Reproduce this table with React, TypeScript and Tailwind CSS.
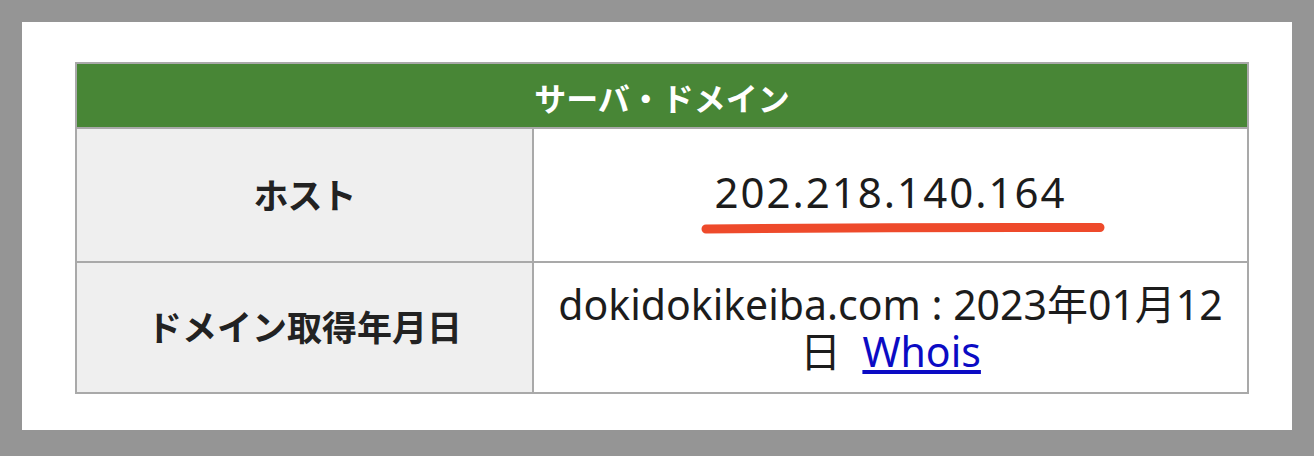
import React from "react";

export default function App() {
  const font = { fontFamily: '"Noto Sans", "Noto Sans CJK JP", sans-serif' };
  return (
    <div className="w-[1314px] h-[456px] bg-[#959595] pt-[22px] pl-[22px]" style={font}>
      <div className="w-[1270px] h-[408px] bg-white pl-[53px] pr-[43px] pt-[40px]">
        <div className="border-2 border-[#a9a9a9]">
          <div className="h-[65px] bg-[#488636] flex items-center justify-center border-b-2 border-[#a9a9a9]">
            <span className="text-[32px] font-bold text-white leading-none pt-[6px]">サーバ・ドメイン</span>
          </div>
          <div className="grid grid-cols-[457px_1fr] h-[134px] border-b-2 border-[#a9a9a9]">
            <div className="bg-[#efefef] border-r-2 border-[#a9a9a9] flex items-center justify-center">
              <span className="text-[35px] font-bold text-[#222] leading-none tracking-[-1px]">ホスト</span>
            </div>
            <div className="relative flex items-center justify-center">
              <span className="text-[42px] tracking-[2px] text-[#1c1c1c] leading-none mb-[6px]" style={{ fontFamily: '"Noto Sans", sans-serif' }}>
                202.218.140.164
              </span>
              <svg className="absolute left-[166px] top-[88px]" width="410" height="22" viewBox="0 0 410 22">
                <path d="M6 12 Q 200 10 400 10.5" stroke="#ee4a2b" strokeWidth="9" strokeLinecap="round" fill="none" />
              </svg>
            </div>
          </div>
          <div className="grid grid-cols-[457px_1fr] h-[129px]">
            <div className="bg-[#efefef] border-r-2 border-[#a9a9a9] flex items-center justify-center">
              <span className="text-[35px] font-bold text-[#222] leading-none">ドメイン取得年月日</span>
            </div>
            <div className="flex items-center justify-center px-[10px]">
              <p className="text-[41px] leading-[47px] text-[#1c1c1c] text-center">
                dokidokikeiba.com : 2023年01月12日{"\u00a0 "}
                <a href="#" className="text-[#0b0bc4] underline">Whois</a>
              </p>
            </div>
          </div>
        </div>
      </div>
    </div>
  );
}
